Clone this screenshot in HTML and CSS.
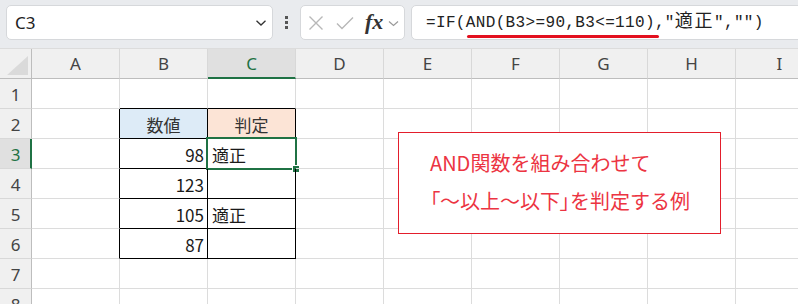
FILE: index.html
```html
<!DOCTYPE html>
<html lang="ja">
<head>
<meta charset="utf-8">
<link rel="stylesheet" href="styles.css">
</head>
<body>
<div class="app">
  <div class="toolbar">
    <div class="namebox">
      <span class="name">C3</span>
      <svg class="chev" width="12" height="8" viewBox="0 0 12 8"><path d="M1.5 1.8 L6 6 L10.5 1.8" fill="none" stroke="#333" stroke-width="1.3"/></svg>
    </div>
    <div class="dots"><i></i><i></i><i></i></div>
    <div class="fxbox">
      <svg class="ico" width="16" height="16" viewBox="0 0 16 16"><path d="M1.5 1.5 L14.5 14.5 M14.5 1.5 L1.5 14.5" stroke="#b8b8b8" stroke-width="1.4" fill="none"/></svg>
      <svg class="ico" width="18" height="14" viewBox="0 0 18 14"><path d="M1 7.5 L6 12.5 L17 1.5" stroke="#b8b8b8" stroke-width="1.4" fill="none"/></svg>
      <span class="fx">fx</span>
      <svg class="chev2" width="11" height="7" viewBox="0 0 11 7"><path d="M1 1.5 L5.5 5.5 L10 1.5" fill="none" stroke="#9a9a9a" stroke-width="1.2"/></svg>
    </div>
    <div class="formula">=IF(<span class="mark">AND(B3&gt;=90,B3&lt;=110)</span>,"<span class="jp">適正</span>","")</div>
  </div>

  <div class="sheet">
    <div class="corner"></div>
    <div class="ch">A</div><div class="ch">B</div><div class="ch active">C</div><div class="ch">D</div><div class="ch">E</div><div class="ch">F</div><div class="ch">G</div><div class="ch">H</div><div class="ch">I</div>

    <div class="rh">1</div>
    <div class="c"></div><div class="c tb"></div><div class="c tb"></div><div class="c"></div><div class="c"></div><div class="c"></div><div class="c"></div><div class="c"></div><div class="c"></div>

    <div class="rh">2</div>
    <div class="c tr"></div><div class="c t hdr1">数値</div><div class="c t hdr2">判定</div><div class="c"></div><div class="c"></div><div class="c"></div><div class="c"></div><div class="c"></div><div class="c"></div>

    <div class="rh active">3</div>
    <div class="c tr"></div><div class="c t num">98</div><div class="c t txt sel">適正<span class="selbox"></span><span class="handle"></span></div><div class="c"></div><div class="c"></div><div class="c"></div><div class="c"></div><div class="c"></div><div class="c"></div>

    <div class="rh">4</div>
    <div class="c tr"></div><div class="c t num">123</div><div class="c t txt"></div><div class="c"></div><div class="c"></div><div class="c"></div><div class="c"></div><div class="c"></div><div class="c"></div>

    <div class="rh">5</div>
    <div class="c tr"></div><div class="c t num">105</div><div class="c t txt">適正</div><div class="c"></div><div class="c"></div><div class="c"></div><div class="c"></div><div class="c"></div><div class="c"></div>

    <div class="rh">6</div>
    <div class="c tr"></div><div class="c t num">87</div><div class="c t txt"></div><div class="c"></div><div class="c"></div><div class="c"></div><div class="c"></div><div class="c"></div><div class="c"></div>

    <div class="rh">7</div>
    <div class="c"></div><div class="c"></div><div class="c"></div><div class="c"></div><div class="c"></div><div class="c"></div><div class="c"></div><div class="c"></div><div class="c"></div>

    <div class="rh">8</div>
    <div class="c"></div><div class="c"></div><div class="c"></div><div class="c"></div><div class="c"></div><div class="c"></div><div class="c"></div><div class="c"></div><div class="c"></div>

    <div class="note">
      <div>AND関数を組み合わせて</div>
      <div class="l2"><span class="br">「</span>～以上～以下<span class="br">」</span>を判定する例</div>
    </div>
  </div>
</div>
</body>
</html>
```

FILE: styles.css
```css
* { box-sizing: border-box; }
html, body { margin: 0; padding: 0; }
body {
  width: 798px;
  height: 304px;
  overflow: hidden;
  background: #fff;
  font-family: "Noto Sans CJK JP", "Noto Sans", sans-serif;
  color: #222;
}
.app { width: 798px; height: 304px; overflow: hidden; }

/* toolbar */
.toolbar {
  height: 49px;
  background: #e9ebee;
  border-bottom: 1px solid #dcdcdc;
  display: flex;
  align-items: flex-start;
  padding: 5px 0 0 6px;
}
.toolbar > * { flex-shrink: 0; }
.namebox {
  width: 267px;
  height: 35px;
  background: #fff;
  border: 1px solid #d6d8db;
  border-radius: 5px;
  display: flex;
  align-items: center;
  justify-content: space-between;
  padding: 0 5px 0 8px;
}
.name { font-family: "Noto Sans", sans-serif; font-size: 17px; color: #222; }
.chev { margin-top: 1px; }
.dots {
  width: 27px;
  height: 35px;
  display: flex;
  flex-direction: column;
  align-items: center;
  justify-content: center;
  gap: 2px;
}
.dots i { display: block; width: 3px; height: 3px; background: #555; }
.fxbox {
  width: 105px;
  height: 35px;
  background: #fff;
  border: 1px solid #d6d8db;
  border-radius: 5px;
  display: flex;
  align-items: center;
  padding-left: 7px;
}
.fxbox .ico:nth-child(1) { margin-right: 12px; }
.fxbox .ico:nth-child(2) { margin-right: 11px; }
.fx {
  font-family: "Liberation Serif", serif;
  font-style: italic;
  font-weight: bold;
  font-size: 22px;
  color: #333;
  margin-right: 5px;
  margin-top: -1px;
}
.chev2 { margin-top: 2px; }
.formula {
  margin-left: 6px;
  width: 420px;
  height: 35px;
  background: #fff;
  border: 1px solid #d6d8db;
  border-radius: 5px;
  padding-left: 14px;
  font-family: "Liberation Mono", "Noto Sans CJK JP", monospace;
  font-size: 16px;
  letter-spacing: 0.35px;
  line-height: 33px;
  color: #222;
  white-space: nowrap;
}
.formula .jp { letter-spacing: 1.6px; font-size: 18px; }
.mark { position: relative; }
.mark::after {
  content: "";
  position: absolute;
  left: 1px;
  right: -4px;
  bottom: -6px;
  height: 3px;
  border-radius: 2px;
  background: #e3101f;
}

/* sheet */
.sheet {
  position: relative;
  display: grid;
  grid-template-columns: 32px repeat(9, 88px);
  grid-auto-rows: 30px;
  font-size: 17px;
}
.corner {
  position: relative;
  background: #f0f0f0;
  border-right: 1px solid #bdbdbd;
  border-bottom: 1px solid #bdbdbd;
}
.corner::after {
  content: "";
  position: absolute;
  right: 3px;
  bottom: 3px;
  width: 21px;
  height: 19px;
  background: #dadada;
  clip-path: polygon(100% 0, 100% 100%, 0 100%);
}
.ch {
  background: #f0f0f0;
  border-right: 1px solid #d8d8d8;
  border-bottom: 1px solid #bdbdbd;
  display: flex;
  align-items: center;
  justify-content: center;
  color: #444;
  font-family: "Noto Sans", sans-serif;
  font-size: 17px;
}
.ch.active {
  background: #e0e0e0;
  border-bottom: 2px solid #1f7244;
  color: #1f7244;
  padding-top: 1px;
}
.rh {
  background: #f0f0f0;
  border-right: 1px solid #bdbdbd;
  border-bottom: 1px solid #d8d8d8;
  display: flex;
  align-items: center;
  justify-content: center;
  color: #444;
  font-family: "Noto Sans", sans-serif;
  font-size: 17px;
  padding-top: 1px;
}
.rh.active {
  background: #e0e0e0;
  border-right: 2px solid #1f7244;
  color: #1f7244;
  padding-left: 1px;
}
.c {
  position: relative;
  border-right: 1px solid #dcdcdc;
  border-bottom: 1px solid #dcdcdc;
  display: flex;
  align-items: center;
  padding-top: 2px;
  color: #1a1a1a;
}
.c.tb { border-bottom-color: #000; }
.c.tr { border-right-color: #000; }
.c.t { border-right-color: #000; border-bottom-color: #000; }
.hdr1 { background: #ddebf7; justify-content: center; color: #333; }
.hdr2 { background: #fce4d6; justify-content: center; color: #333; }
.num { justify-content: flex-end; padding-right: 3px; }
.txt { padding-left: 4px; }
.selbox {
  position: absolute;
  left: -2px;
  top: -2px;
  width: 91px;
  height: 33px;
  border: 2px solid #1f7244;
}
.handle {
  position: absolute;
  left: 85px;
  top: 27px;
  width: 6px;
  height: 6px;
  background: #1f7244;
  outline: 1px solid #fff;
}

.note {
  position: absolute;
  left: 398px;
  top: 83px;
  width: 323px;
  height: 102px;
  background: #fff;
  border: 1px solid #e31e2c;
  padding: 11px 0 0 31px;
  color: #ec3442;
  font-family: "Noto Sans CJK JP", sans-serif;
  font-size: 20px;
  line-height: 38px;
  white-space: nowrap;
}
.note .br { font-feature-settings: "palt"; }
```
